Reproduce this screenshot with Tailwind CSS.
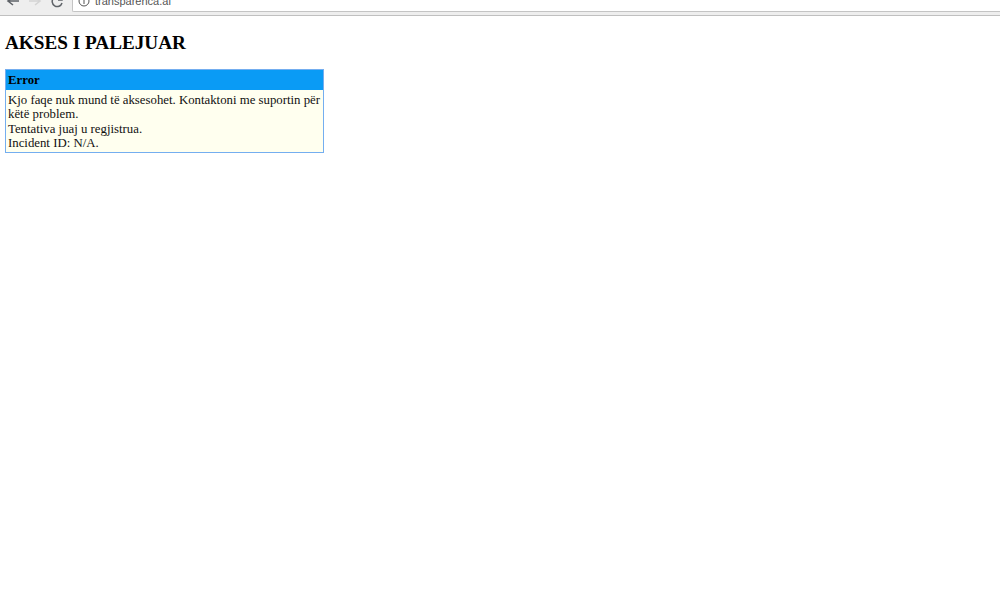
<!DOCTYPE html>
<html>
<head>
<meta charset="utf-8">
<script src="https://cdn.jsdelivr.net/npm/@tailwindcss/browser@4"></script>
</head>
<body class="bg-white font-['Liberation_Serif',serif] text-black overflow-hidden h-[600px]">
<div class="h-[16px] bg-[#eeeeee] border-b border-[#c0c0c0] flex items-start overflow-hidden relative">
  <div class="h-[12px] flex items-center shrink-0 w-[72px] pl-[6px] gap-[8px]">
    <svg width="14" height="12" viewBox="0 0 14 12" class="-mt-[9px]"><path d="M13 5H3M7 1L2 5l5 4" fill="none" stroke="#5f6368" stroke-width="1.6"/></svg>
    <svg width="14" height="12" viewBox="0 0 14 12" class="-mt-[9px]"><path d="M1 5h10M7 1l5 4-5 4" fill="none" stroke="#d4d4d4" stroke-width="1.6"/></svg>
    <svg width="14" height="12" viewBox="0 0 14 12" class="-mt-[9px]"><path d="M11.5 3A5 5 0 1 0 12 7M12 0v4H8" fill="none" stroke="#5f6368" stroke-width="1.5"/></svg>
  </div>
  <div class="h-[12px] flex-1 bg-white border-l border-b border-[#c4c4c4] rounded-bl-[2px] flex items-start pl-[5px] gap-[5px] overflow-hidden">
    <svg width="12" height="12" viewBox="0 0 12 12" class="-mt-[4px] shrink-0"><circle cx="6" cy="5" r="5" fill="none" stroke="#555" stroke-width="1"/><path d="M6 4v4M6 1.5v1.5" stroke="#555" stroke-width="1"/></svg>
    <span class="font-['Liberation_Sans',sans-serif] text-[11px] leading-[13px] text-[#555] -mt-[5px]">transparenca.al</span>
  </div>
</div>
<main class="pl-[5px] pt-[16px]">
  <h1 class="text-[19.2px] leading-[22px] font-bold">AKSES I PALEJUAR</h1>
  <div class="w-[319px] mt-[15px] border border-[#74aef0]">
    <div class="h-[20px] bg-[#0a9bf5] pl-[2px] text-[12.8px] leading-[20px] font-bold">Error</div>
    <div class="bg-[#ffffef] pl-[2px] pr-[2px] pt-[3px] pb-[1px] text-[12.8px] leading-[14.4px] text-[#111]">
      <p>Kjo faqe nuk mund të aksesohet. Kontaktoni me suportin për këtë problem.</p>
      <p>Tentativa juaj u regjistrua.</p>
      <p>Incident ID: N/A.</p>
    </div>
  </div>
</main>
</body>
</html>
